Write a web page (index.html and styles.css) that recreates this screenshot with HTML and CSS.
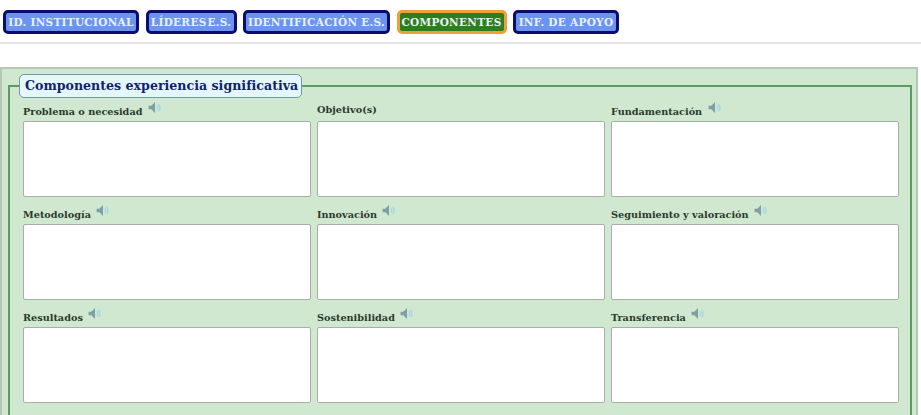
FILE: index.html
```html
<!DOCTYPE html>
<html lang="es">
<head>
    <meta charset="UTF-8">
    <title>Componentes experiencia significativa</title>
    <link rel="stylesheet" href="styles.css">
</head>
<body>
    <svg width="0" height="0" class="sprites">
        <symbol id="speaker" viewBox="0 0 14 12">
            <path d="M0 4h3l4-4v12l-4-4H0z" fill="#7f9fa3"/>
            <path d="M9 3.5q2 2.5 0 5M11 2q3 4 0 8" fill="none" stroke="#a6d8e4" stroke-width="1.4"/>
        </symbol>
    </svg>

    <nav class="tabs">
        <a class="tab tab-id">ID. INSTITUCIONAL</a>
        <a class="tab tab-lideres">LÍDERES E.S.</a>
        <a class="tab tab-identificacion">IDENTIFICACIÓN E.S.</a>
        <a class="tab tab-componentes active">COMPONENTES</a>
        <a class="tab tab-apoyo">INF. DE APOYO</a>
    </nav>
    <div class="rule"></div>

    <div class="panel">
        <fieldset class="group">
            <legend>Componentes experiencia significativa</legend>
            <div class="fields">
                <div class="field">
                    <label>Problema o necesidad <svg class="speaker"><use href="#speaker"/></svg></label>
                    <textarea></textarea>
                </div>
                <div class="field">
                    <label>Objetivo(s)</label>
                    <textarea></textarea>
                </div>
                <div class="field">
                    <label>Fundamentación <svg class="speaker"><use href="#speaker"/></svg></label>
                    <textarea></textarea>
                </div>
                <div class="field">
                    <label>Metodología <svg class="speaker"><use href="#speaker"/></svg></label>
                    <textarea></textarea>
                </div>
                <div class="field">
                    <label>Innovación <svg class="speaker"><use href="#speaker"/></svg></label>
                    <textarea></textarea>
                </div>
                <div class="field">
                    <label>Seguimiento y valoración <svg class="speaker"><use href="#speaker"/></svg></label>
                    <textarea></textarea>
                </div>
                <div class="field">
                    <label>Resultados <svg class="speaker"><use href="#speaker"/></svg></label>
                    <textarea></textarea>
                </div>
                <div class="field">
                    <label>Sostenibilidad <svg class="speaker"><use href="#speaker"/></svg></label>
                    <textarea></textarea>
                </div>
                <div class="field">
                    <label>Transferencia <svg class="speaker"><use href="#speaker"/></svg></label>
                    <textarea></textarea>
                </div>
            </div>
        </fieldset>
    </div>
</body>
</html>
```

FILE: styles.css
```css
* {
    box-sizing: border-box;
}
html, body {
    height: 415px;
    overflow: hidden;
}
body {
    margin: 0;
    background-color: #ffffff;
    font-family: "DejaVu Serif", serif;
    font-weight: bold;
}
.sprites {
    position: absolute;
}
.tabs {
    display: flex;
    gap: 6.5px;
    padding: 10px 0 0 3px;
}
.tab {
    height: 24px;
    display: flex;
    align-items: center;
    justify-content: center;
    background-color: #6c94ee;
    color: #e8f0fb;
    border: 3px solid #0c0c6e;
    border-radius: 5px;
    font-size: 10.5px;
    letter-spacing: 0.3px;
    white-space: nowrap;
}
.tab-id { width: 136px; }
.tab-lideres { width: 91px; word-spacing: -3px; }
.tab-identificacion { width: 147px; }
.tab-componentes { width: 110px; }
.tab-apoyo { width: 106px; }
.tab.active {
    background-color: #2f7d1e;
    border-color: #ee9f3a;
}
.rule {
    height: 2px;
    margin-top: 8px;
    background-color: #e6e6e6;
}
.panel {
    width: 918px;
    height: 348px;
    margin-top: 23px;
    padding: 5px 4px 0 6px;
    background-color: #d0e7d0;
    border: 2px solid #b5c7b5;
    border-bottom: 0;
    overflow: hidden;
}
.group {
    margin: 0;
    padding: 0 13px;
    min-width: 0;
    height: 341px;
    border: 2px solid #5d9a63;
    border-bottom: 0;
}
.group legend {
    margin-left: -4px;
    padding: 0 5px;
    width: 283px;
    height: 24px;
    line-height: 22px;
    background-color: #e4f7fa;
    color: #12236e;
    border: 1px solid #6f9aa6;
    border-radius: 5px;
    font-size: 12.6px;
    white-space: nowrap;
}
.fields {
    display: grid;
    grid-template-columns: repeat(3, 288px);
    column-gap: 6px;
    row-gap: 6px;
    margin-top: 2px;
}
.field label {
    display: block;
    height: 21px;
    padding-top: 4px;
    color: #2c3a2c;
    font-size: 9.7px;
    white-space: nowrap;
}
.field textarea {
    display: block;
    width: 288px;
    height: 76px;
    background-color: #ffffff;
    border: 1px solid #a9aea9;
    border-radius: 2px;
    resize: none;
}
.speaker {
    width: 14px;
    height: 11px;
    margin-left: 2px;
    position: relative;
    top: -2px;
}
```
